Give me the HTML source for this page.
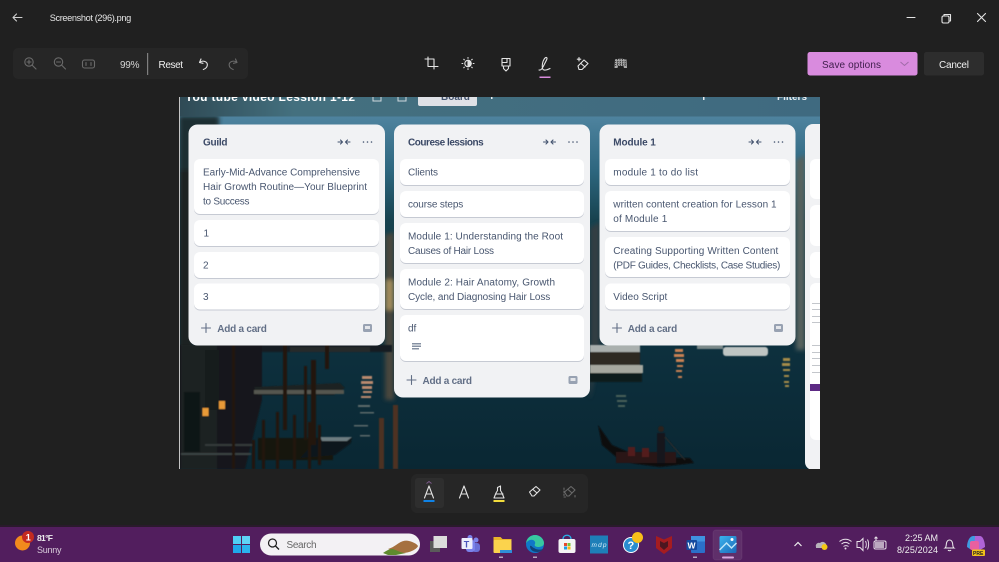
<!DOCTYPE html>
<html><head><meta charset="utf-8"><title>Screenshot (296).png</title>
<style>
html,body{margin:0;padding:0;background:#202020;width:999px;height:562px;overflow:hidden}
svg{display:block;filter:blur(.3px)}
text{font-family:"Liberation Sans",sans-serif}
.c{font-size:10px;fill:#48566f}
.t{font-size:10px;fill:#3b4966;font-weight:bold}
.a{font-size:10px;fill:#626f86;font-weight:bold}
.w{fill:#e6e6e6;font-size:10px}
.i{fill:none;stroke:#e4e4e4;stroke-width:1.1;stroke-linecap:round;stroke-linejoin:round}
.d{fill:none;stroke:#6a6a6a;stroke-width:1.1;stroke-linecap:round;stroke-linejoin:round}
.g{fill:none;stroke:#626f86;stroke-width:1.1;stroke-linecap:round;stroke-linejoin:round}
.cards{fill:#fff;filter:drop-shadow(0 1px 0 #c6cad3)}
</style></head><body>
<svg xmlns="http://www.w3.org/2000/svg" width="999" height="562" viewBox="0 0 999 562">
<defs>
<linearGradient id="sky" x1="0" y1="0" x2="0" y2="1"><stop offset="0" stop-color="#5a8daa"/><stop offset=".2" stop-color="#2d667e"/><stop offset=".33" stop-color="#17424f"/><stop offset=".6" stop-color="#0e3240"/><stop offset="1" stop-color="#0a2733"/></linearGradient>
<linearGradient id="top" x1="0" y1="0" x2="1" y2="0"><stop offset="0" stop-color="#2f4a55"/><stop offset=".18" stop-color="#44707f"/><stop offset="1" stop-color="#3f6a80"/></linearGradient>
<linearGradient id="pho" x1="0" y1="0" x2="1" y2="1"><stop offset="0" stop-color="#3ab4ee"/><stop offset="1" stop-color="#1b68b8"/></linearGradient>
<filter id="b1"><feGaussianBlur stdDeviation=".6"/></filter>
<filter id="b2"><feGaussianBlur stdDeviation="2"/></filter>
<clipPath id="im"><rect x="179" y="97" width="641" height="372"/></clipPath>
</defs>
<rect width="999" height="562" fill="#202020"/>

<!-- background photo -->
<g clip-path="url(#im)">
<rect x="179" y="97" width="641" height="372" fill="url(#sky)"/>
<g filter="url(#b2)">
<rect x="179" y="116" width="40" height="60" fill="#1b2d30"/>
<rect x="179" y="170" width="14" height="200" fill="#1a2122"/>
<polygon points="385,235 394,232 394,400 385,400" fill="#4a473c"/>
<rect x="385" y="280" width="9" height="30" fill="#a08a5c"/>
<polygon points="590,228 600,222 600,350 590,400" fill="#303c42"/>
<polygon points="796,160 805,155 805,350 796,350" fill="#56625f"/>
</g>
<g filter="url(#b1)">
<polygon points="179,345 262,345 262,400 245,469 179,469" fill="#14181a"/>
<rect x="181" y="345" width="36" height="124" fill="#1f2324"/>
<rect x="184" y="392" width="16" height="60" fill="#111414"/>
<rect x="205" y="350" width="14" height="60" fill="#171a1b"/>
<rect x="181" y="453" width="70" height="2" fill="#3a4242"/>
<rect x="205" y="444" width="50" height="2" fill="#343b3b"/>
<polygon points="254,387 340,383 345,388 334,395 258,395" fill="#1c2324"/>
<rect x="254" y="390" width="90" height="4" fill="#55574f"/>
<rect x="262" y="345" width="130" height="7" fill="#161e20"/>
<rect x="290" y="347" width="80" height="5" fill="#262c2b"/>
<rect x="258" y="438" width="75" height="22" fill="#171411"/>
<polygon points="318,438 352,437 351,443 335,455 300,458" fill="#11181a"/>
<polygon points="320,437 352,437 347,441 322,441" fill="#6d7c80"/>
<g fill="#221710">
<rect x="232" y="345" width="3" height="124"/><rect x="283" y="345" width="4" height="85"/>
<rect x="311" y="360" width="5" height="85"/><rect x="304" y="366" width="3" height="74"/><rect x="325" y="345" width="4" height="24"/>
<rect x="276" y="412" width="3" height="57"/><rect x="293" y="415" width="3" height="54"/><rect x="308" y="422" width="3" height="47"/><rect x="252" y="440" width="3" height="29"/><rect x="262" y="420" width="3" height="49"/><rect x="318" y="425" width="3" height="40"/>
</g>
<rect x="379" y="418" width="5" height="51" fill="#4e3020"/><rect x="393" y="405" width="5" height="64" fill="#4e3020"/>
<g fill="#b98a6e"><rect x="362" y="376" width="10" height="3"/><rect x="361" y="381" width="12" height="3"/><rect x="362" y="386" width="10" height="3"/><rect x="363" y="391" width="9" height="2"/><rect x="361" y="396" width="10" height="2"/></g>
<g fill="#5d6b6a"><rect x="358" y="405" width="12" height="2"/><rect x="360" y="412" width="14" height="1.500"/><rect x="354" y="425" width="14" height="1.500"/><rect x="360" y="435" width="10" height="1.500"/></g>
<rect x="202.500" y="408" width="6" height="8" fill="#e89a38"/>
<rect x="219" y="401" width="6" height="8" fill="#e89a38"/>
<rect x="590" y="345" width="50" height="7" fill="#aab0ae"/><rect x="590" y="352" width="50" height="13" fill="#2d2b22"/><rect x="590" y="365" width="53" height="8" fill="#a6a89f"/><rect x="590" y="373" width="52" height="9" fill="#0e1a1e"/>
<rect x="723" y="347" width="45" height="9" rx="3" fill="#bfc5c3"/><rect x="697" y="345" width="26" height="4" fill="#7c8a8a"/>
<g fill="#c98152"><rect x="675" y="349" width="8" height="3"/><rect x="674" y="354" width="10" height="3"/><rect x="676" y="359" width="8" height="3"/><rect x="677" y="365" width="6" height="2"/><rect x="676" y="370" width="6" height="2"/><rect x="678" y="376" width="4" height="2"/></g>
<g fill="#a58b4a"><rect x="783" y="358" width="7" height="3"/><rect x="782" y="363" width="8" height="3"/><rect x="783" y="369" width="7" height="2"/><rect x="784" y="375" width="5" height="2"/><rect x="784" y="381" width="5" height="2"/><rect x="785" y="385" width="4" height="2"/></g>
<g fill="#486059"><rect x="616" y="395" width="10" height="2"/><rect x="617" y="400" width="10" height="2"/><rect x="618" y="405" width="7" height="2"/></g>
<polygon points="598,425 602,445 622,462 660,467 694,463 690,458 640,457 612,445" fill="#0f0c0d"/>
<rect x="616" y="452" width="60" height="11" fill="#291513"/><rect x="628" y="447" width="7" height="9" fill="#521c1f"/><rect x="642" y="448" width="7" height="9" fill="#521c1f"/>
<rect x="657" y="433" width="8" height="30" fill="#18181a"/><circle cx="661" cy="429" r="3" fill="#2a201c"/>
<line x1="665" y1="437" x2="685" y2="460" stroke="#2a2a2a" stroke-width="1.200"/>
</g>
<rect x="179" y="97" width="641" height="19.500" fill="url(#top)"/>
<text x="185" y="101" fill="#fff" textLength="170" style="font-size:12px;font-weight:bold">You tube video Lession 1-12</text>
<rect x="373" y="96" width="8" height="5" fill="none" stroke="#cfd8de" stroke-width="1"/>
<rect x="398" y="96" width="8" height="5" fill="none" stroke="#cfd8de" stroke-width="1"/>
<rect x="418" y="85" width="59" height="21" rx="2" fill="#dfe1e6"/>
<text x="441" y="100" style="font-size:10px;font-weight:bold" fill="#44546f">Board</text>
<text x="777" y="100" style="font-size:10px;font-weight:bold" fill="#e8eef2">Filters</text>
<rect x="491" y="97" width="1.500" height="2" fill="#e8eef2"/>
<rect x="703" y="97" width="1.500" height="3" fill="#e8eef2"/>
<rect x="178.500" y="97" width="1.500" height="372" fill="#c4c4c4"/>

<!-- List 4 -->
<rect x="805" y="124" width="40" height="346" rx="8" fill="#f1f2f4"/>
<rect x="810" y="159" width="30" height="40" rx="6" fill="#fff"/>
<rect x="810" y="205" width="30" height="41" rx="6" fill="#fff"/>
<rect x="810" y="252" width="30" height="26" rx="6" fill="#fff"/>
<rect x="810" y="283" width="30" height="157" rx="6" fill="#fff"/>
<rect x="810" y="384" width="12" height="7" fill="#5d2a84"/>
<g fill="#c3c6cb"><rect x="812" y="303" width="8" height="1"/><rect x="812" y="309" width="8" height="1"/><rect x="812" y="316" width="8" height="1"/><rect x="812" y="322" width="8" height="1"/><rect x="812" y="345" width="8" height="1"/><rect x="812" y="352" width="8" height="1"/><rect x="812" y="358" width="8" height="1"/><rect x="812" y="365" width="8" height="1"/><rect x="812" y="372" width="8" height="1"/></g>
</g>

<!-- List 1 -->
<rect x="188.500" y="124.500" width="196.500" height="221" rx="9" fill="#f1f2f4"/>
<g class="cards">
<rect x="194" y="159" width="185" height="55" rx="6"/><rect x="194" y="220" width="185" height="26" rx="6"/><rect x="194" y="252" width="185" height="26" rx="6"/><rect x="194" y="283.500" width="185" height="26" rx="6"/></g>
<text class="t" x="203" y="145.500" textLength="24.500">Guild</text>
<text class="c" x="203" y="175.500" textLength="157">Early-Mid-Advance Comprehensive</text>
<text class="c" x="203" y="190" textLength="164">Hair Growth Routine—Your Blueprint</text>
<text class="c" x="203" y="204.500" textLength="46.500">to Success</text>
<text class="c" x="203.500" y="236.500">1</text>
<text class="c" x="203" y="268.500">2</text>
<text class="c" x="203" y="300">3</text>
<text class="a" x="217.300" y="332" textLength="49.500">Add a card</text>

<!-- List 2 -->
<rect x="394" y="124.500" width="196" height="273" rx="9" fill="#f1f2f4"/>
<g class="cards">
<rect x="400" y="159" width="184" height="26" rx="6"/><rect x="400" y="191" width="184" height="26" rx="6"/><rect x="400" y="223" width="184" height="40" rx="6"/><rect x="400" y="269" width="184" height="40" rx="6"/><rect x="400" y="315" width="184" height="46" rx="6"/></g>
<text class="t" x="408" y="145.500" textLength="75.700">Courese lessions</text>
<text class="c" x="408" y="175.500" textLength="30">Clients</text>
<text class="c" x="408" y="207.500" textLength="55.300">course steps</text>
<text class="c" x="408" y="239.500" textLength="155">Module 1: Understanding the Root</text>
<text class="c" x="408" y="254" textLength="86">Causes of Hair Loss</text>
<text class="c" x="408" y="285.500" textLength="147">Module 2: Hair Anatomy, Growth</text>
<text class="c" x="408" y="300" textLength="142.300">Cycle, and Diagnosing Hair Loss</text>
<text class="c" x="408" y="331.500">df</text>
<g fill="#8590a2"><rect x="412" y="343" width="9" height="1.500"/><rect x="412" y="345.500" width="9" height="1.500"/><rect x="412" y="348" width="7" height="1.500"/></g>
<text class="a" x="422.500" y="384" textLength="49.500">Add a card</text>

<!-- List 3 -->
<rect x="599.500" y="124.500" width="196" height="221" rx="9" fill="#f1f2f4"/>
<g class="cards">
<rect x="605" y="159" width="185" height="26" rx="6"/><rect x="605" y="191" width="185" height="40" rx="6"/><rect x="605" y="237" width="185" height="40" rx="6"/><rect x="605" y="283.500" width="185" height="26" rx="6"/></g>
<text class="t" x="613.300" y="145.500" textLength="42.500">Module 1</text>
<text class="c" x="613.300" y="175.500" textLength="84.700">module 1 to do list</text>
<text class="c" x="613.300" y="207.500" textLength="163.300">written content creation for Lesson 1</text>
<text class="c" x="613.300" y="222" textLength="54">of Module 1</text>
<text class="c" x="613.300" y="254" textLength="165">Creating Supporting Written Content</text>
<text class="c" x="613.300" y="268.500" textLength="167">(PDF Guides, Checklists, Case Studies)</text>
<text class="c" x="613.300" y="300" textLength="54">Video Script</text>
<text class="a" x="627.700" y="332" textLength="49.500">Add a card</text>

<!-- list header & footer icons -->
<g>
<g class="g" style="stroke:#44546f"><path d="M338 142h4M340.500 140l2 2-2 2M350 142h-4M347.500 140l-2 2 2 2"/></g>
<g fill="#44546f"><circle cx="363.500" cy="142" r=".8"/><circle cx="367.500" cy="142" r=".8"/><circle cx="371.500" cy="142" r=".8"/></g>
<path class="g" d="M201.500 328h9M206 323.500v9"/>
<rect x="363" y="324" width="9" height="8" rx="1.500" fill="#98a2b2"/><rect x="365" y="326" width="5" height="3" fill="#e4e6ea"/>
</g>
<g transform="translate(205.500 0)">
<g class="g" style="stroke:#44546f"><path d="M338 142h4M340.500 140l2 2-2 2M350 142h-4M347.500 140l-2 2 2 2"/></g>
<g fill="#44546f"><circle cx="363.500" cy="142" r=".8"/><circle cx="367.500" cy="142" r=".8"/><circle cx="371.500" cy="142" r=".8"/></g>
</g>
<g transform="translate(205.500 52)">
<path class="g" d="M201.500 328h9M206 323.500v9"/>
<rect x="363" y="324" width="9" height="8" rx="1.500" fill="#98a2b2"/><rect x="365" y="326" width="5" height="3" fill="#e4e6ea"/>
</g>
<g transform="translate(411 0)">
<g class="g" style="stroke:#44546f"><path d="M338 142h4M340.500 140l2 2-2 2M350 142h-4M347.500 140l-2 2 2 2"/></g>
<g fill="#44546f"><circle cx="363.500" cy="142" r=".8"/><circle cx="367.500" cy="142" r=".8"/><circle cx="371.500" cy="142" r=".8"/></g>
<path class="g" d="M201.500 328h9M206 323.500v9"/>
<rect x="363" y="324" width="9" height="8" rx="1.500" fill="#98a2b2"/><rect x="365" y="326" width="5" height="3" fill="#e4e6ea"/>
</g>

<!-- Title bar -->
<path class="i" d="M13 17.500h9M13 17.500l3.500-3.500M13 17.500l3.500 3.500" style="stroke:#cfcfcf"/>
<text class="w" x="49.700" y="21" textLength="81.500" style="font-size:9.2px">Screenshot (296).png</text>
<path class="i" d="M907 17.500h8"/>
<rect x="942" y="16" width="7" height="7" rx="1.500" class="i"/><path class="i" d="M944 16v-1.500h6.500v6.500h-1.500"/>
<path class="i" d="M977.500 13.500l8 8M985.500 13.500l-8 8"/>

<!-- zoom panel -->
<rect x="13" y="48" width="235" height="31" rx="5" fill="#262626"/>
<g class="d"><circle cx="29" cy="62" r="4.200"/><path d="M32 65l4 4M27 62h4M29 60v4"/><circle cx="58.500" cy="62" r="4.200"/><path d="M61.500 65l4 4M56.500 62h4"/><rect x="82.500" y="60" width="12" height="8" rx="2"/><path d="M86 62.500v3M91 62.500v3"/></g>
<text class="w" x="120" y="68" textLength="19.500" style="fill:#d4d4d4">99%</text>
<rect x="147" y="53" width="1.200" height="22" fill="#7f7f7f"/>
<text class="w" x="158.500" y="68" textLength="24.500" style="fill:#f0f0f0">Reset</text>
<path class="i" d="M201 59l-1.500 3.500 3.500.8M199.800 62.300c3-2.500 8-.5 7.500 3-.3 2-2 3.500-4 4.200"/>
<path class="d" d="M235.500 59l1.500 3.500-3.500.8M236.700 62.300c-3-2.500-8-.5-7.500 3 .3 2 2 3.500 4 4.200"/>

<!-- center tools -->
<g class="i">
<path d="M425 59h9v10M428 57v9.500h10"/>
<circle cx="468" cy="63.500" r="3.200"/><path d="M468 60.300a3.200 3.200 0 0 1 0 6.400z" fill="#e4e4e4"/><path d="M468 57.500v.8M468 68.700v.8M462 63.500h.8M473.200 63.500h.8M463.800 59.300l.5.5M471.700 67.200l.5.500M463.800 67.700l.5-.5M471.700 59.800l.5-.5"/>
<path d="M502 58.500h8v7.500h-8zM503.500 66v2.500l2.500 2.500 2.500-2.500V66M502 62.500h5v-4"/>
<path d="M539 70c2 .5 3-1 5-5s4-7 2.500-7.500-3.500 3-4 6-.5 6 1.500 6.500 4-.5 6-1.500"/>
<path d="M578 66l6-6 4 3.500-6 6h-3zM581 63.500l4 3.500"/><path d="M579 57.500v3.500M577.300 59.200h3.500"/>
</g>
<rect x="539.500" y="76.500" width="11" height="1.500" fill="#d88bdc"/>
<path d="M615 59.500c3-1 8-1 11.500 0l.5 8.500h-3l-.5-2h-5.500l-.5 2h-3z" fill="#aaa"/>
<path d="M615 61.500h12M615 63.500h12M615 65.500h12M617.500 59v7M620 59v7M622.500 59v7M625 59v7" stroke="#2a2a2a" stroke-width=".8" stroke-dasharray="1.200 1.200" fill="none"/>

<!-- Save / Cancel -->
<rect x="807.500" y="52" width="110" height="23.500" rx="2.500" fill="#d98bde"/>
<text x="822" y="68" textLength="59" style="font-size:10px" fill="#3f1d4b">Save options</text>
<path d="M900.500 62l4 3.500 4-3.500" fill="none" stroke="#a06ba8" stroke-width="1"/>
<rect x="924" y="52" width="60" height="23.500" rx="2.500" fill="#2d2d2d"/>
<text class="w" x="939" y="68" textLength="30" style="fill:#f0f0f0">Cancel</text>

<!-- bottom tool panel -->
<rect x="411" y="474" width="177" height="39" rx="6" fill="#262626"/>
<rect x="415" y="478" width="29" height="30" rx="3" fill="#2e2e2e"/>
<path d="M426.500 483.500l2.500-2 2.500 2" fill="none" stroke="#7c5a8a" stroke-width="1"/>
<g class="i"><path d="M424.500 498l4.500-12 4.500 12M426 494h6"/><path d="M459.500 498l4.500-12 4.500 12M461 494h6"/><path d="M494 498l2-5 1.500-2.500v-3l3-1.500v4.500l1.500 2.500 2 5zM496 494h7"/><path d="M529.500 492l6.500-5.500 4 3.500-6 6h-2zM533 489.500l4 3.500"/></g>
<rect x="423.500" y="500" width="11" height="2" fill="#0f82e6"/>
<rect x="493.500" y="500" width="11" height="2" fill="#f2dc3c"/>
<g class="d"><path d="M564.500 492l6.500-5.500 4 3.500-6 6h-2zM568 489.500l4 3.500"/><path d="M564 488v9h2M575 497v-2" stroke-dasharray="1.500 1.500"/></g>

<!-- Taskbar -->
<rect y="525" width="999" height="2" fill="#2a1a2c"/>
<rect y="527" width="999" height="35" fill="#521e5e"/>
<circle cx="22.500" cy="543" r="7.500" fill="#f18a1d"/>
<circle cx="28" cy="537" r="6" fill="#c32a20"/>
<text x="25.800" y="540.500" style="font-size:9px;font-weight:bold" fill="#fff">1</text>
<text x="37" y="541" style="font-size:8.5px;font-weight:bold" fill="#eee" textLength="16">81°F</text>
<text x="37" y="553" style="font-size:9px" fill="#d9cddc" textLength="24.500">Sunny</text>
<rect x="233" y="536" width="8" height="8" fill="#4fd0f5"/><rect x="242" y="536" width="8" height="8" fill="#5fd4f7"/><rect x="233" y="545" width="8" height="8" fill="#1fa8ea"/><rect x="242" y="545" width="8" height="8" fill="#2bb4ee"/>
<rect x="260" y="533.500" width="160" height="22" rx="11" fill="#f3f1f4"/>
<circle cx="272.500" cy="543" r="4" fill="none" stroke="#1c1c1c" stroke-width="1.200"/><path d="M275.500 546l3.500 3.500" stroke="#1c1c1c" stroke-width="1.300"/>
<text x="286.500" y="548" style="font-size:10px" fill="#666" textLength="30">Search</text>
<path d="M388 549c4-1 8-4 11-6 3-2 7-3 10-2 4 1 8 3 9 5-1 3-8 7-16 7z" fill="#a5703f"/><path d="M383 553c3-2 6-4 9-4s8 4 14 4l-10 2h-8z" fill="#5f8a2e"/>
<!-- task view -->
<rect x="430" y="541" width="10" height="11" fill="#5a5a5a"/><rect x="433.500" y="536" width="13.500" height="12" fill="#dcdcdc"/>
<!-- teams -->
<circle cx="476" cy="540" r="2.500" fill="#7b83eb"/><rect x="472" y="543" width="8" height="9" rx="3" fill="#6a70d6"/><circle cx="470" cy="537.500" r="2.500" fill="#7b83eb"/><rect x="466" y="540" width="9" height="12" rx="3" fill="#7b83eb"/><rect x="461.500" y="538" width="11" height="11" rx="1" fill="#eceefc"/><text x="463.700" y="547.500" style="font-size:9px;font-weight:bold" fill="#4b53bc">T</text>
<!-- explorer -->
<path d="M493.500 537h7l2 2h9v3h-18z" fill="#e9b52a"/><rect x="493.500" y="540" width="18" height="13" rx="1" fill="#fbd34d"/><rect x="500" y="550" width="12" height="3" fill="#2f8fd8"/>
<!-- edge -->
<circle cx="535" cy="544" r="9" fill="#1078c8"/><path d="M526 544c0-6 5-9 9-9 5 0 9 4 9 8 0 3-3 4-6 4s-4-2-3-3c1-3-2-5-5-4-3 1-4 3-4 4z" fill="#38c8a0"/><path d="M530 546c0 4 3 6 7 6 2 0 5-1 6-3-3 1-6 1-9-1-2-1-3-3-4-2z" fill="#10427a"/>
<!-- store -->
<rect x="558.500" y="539" width="17" height="14" rx="2" fill="#f4f4f4"/><path d="M563 539c0-5 8-5 8 0" fill="none" stroke="#28b0e8" stroke-width="1.300"/><rect x="564" y="543" width="3" height="3" fill="#e8492c"/><rect x="567.500" y="543" width="3" height="3" fill="#79c23a"/><rect x="564" y="546.500" width="3" height="3" fill="#1b9de8"/><rect x="567.500" y="546.500" width="3" height="3" fill="#f8b814"/>
<!-- mdp -->
<rect x="590" y="535.500" width="18" height="18" fill="#1e7fb8"/>
<text x="591.500" y="547" style="font-size:6.5px;font-style:italic" fill="#d7eefa" textLength="15">mdp</text>
<!-- help -->
<circle cx="631" cy="545" r="8" fill="#fff"/><circle cx="631" cy="545" r="7" fill="#2a8ed0"/><text x="627.500" y="549" style="font-size:11px;font-weight:bold" fill="#fff">?</text><circle cx="637.500" cy="537.500" r="5.500" fill="#f7bf19"/>
<!-- mcafee -->
<path d="M656 536l8 3.500 8-3.500v12l-8 6-8-6z" fill="#a51c20"/><path d="M660 541l4 2 4-2v5.500l-4 3.500-4-3.500z" fill="#4c1620"/>
<!-- word -->
<rect x="691" y="536" width="14" height="17" rx="1" fill="#2b6fc9"/><rect x="691" y="536" width="14" height="5.500" fill="#3f92e0"/><rect x="686.500" y="540" width="10.500" height="10" rx="1" fill="#144a9f"/><text x="687.500" y="548.500" style="font-size:8.5px;font-weight:bold" fill="#fff">W</text>
<!-- photos -->
<rect x="713" y="530" width="29" height="30" rx="3" fill="#ffffff" fill-opacity=".08" stroke="#ffffff" stroke-opacity=".06"/>
<rect x="719.500" y="536" width="17" height="17" rx="1.500" fill="url(#pho)"/><path d="M719.500 550l7-7 5 5 5-5" fill="none" stroke="#bde6f9" stroke-width="1.500"/><circle cx="732" cy="539.500" r="1.500" fill="#fff"/>
<rect x="722" y="556.500" width="12" height="2" rx="1" fill="#d9a8e0"/>
<g fill="#b7a5bc"><rect x="499" y="556.500" width="4" height="1.500"/><rect x="533" y="556.500" width="4" height="1.500"/><rect x="693" y="556.500" width="4" height="1.500"/></g>
<!-- tray -->
<path d="M794.500 546l3.500-3.500 3.500 3.500" fill="none" stroke="#eee" stroke-width="1.200"/>
<path d="M816 547c-1-3 2-5 4-4 2-2 5-1 6 1l1 4h-11z" fill="#b8b3ba"/><circle cx="824.500" cy="547" r="3" fill="#f4c814"/>
<g fill="none" stroke="#e9e2ea" stroke-width="1"><path d="M839.500 541.500c3.500-3 8.500-3 12 0M841.500 544c2.500-2 5.500-2 8 0M843.500 546.500c1.500-1 3.500-1 5 0"/><path d="M857 541.500h3l3-3v12l-3-3h-3zM865.500 541c1 2 1 5 0 7M867.500 539.500c1.500 2.500 1.500 7 0 10"/><rect x="874" y="541" width="12" height="8" rx="1.500"/></g>
<circle cx="845.500" cy="548.500" r="1" fill="#e9e2ea"/>
<rect x="875" y="542" width="9" height="6" fill="#e9e2ea" opacity=".7"/><path d="M876 537v4M874.500 538.500l1.500-1.500 1.500 1.500" stroke="#e9e2ea" fill="none"/>
<text x="938" y="541" text-anchor="end" style="font-size:9px" fill="#eee" textLength="33">2:25 AM</text>
<text x="938" y="553" text-anchor="end" style="font-size:9px" fill="#eee" textLength="41">8/25/2024</text>
<path d="M945 548c1.500-1 1-3 1.500-5 .5-2 1.500-3 3-3s2.500 1 3 3c.5 2 0 4 1.500 5zM948 550c.5 1 2.500 1 3 0" fill="none" stroke="#eee" stroke-width="1"/>
<path d="M967 547c0-6 3-11 6-11h5l-2 13h-6z" fill="#3f9be0"/><path d="M975 536h5c3 0 5 6 5 11l-5 3h-6z" fill="#b063d8"/><rect x="970" y="541" width="9" height="9" rx="2" fill="#e860a0"/><rect x="972" y="549.500" width="13" height="6.500" rx="1" fill="#f2c21b"/><text x="973" y="555" style="font-size:5px;font-weight:bold" fill="#222">PRE</text>
</svg>
</body></html>
